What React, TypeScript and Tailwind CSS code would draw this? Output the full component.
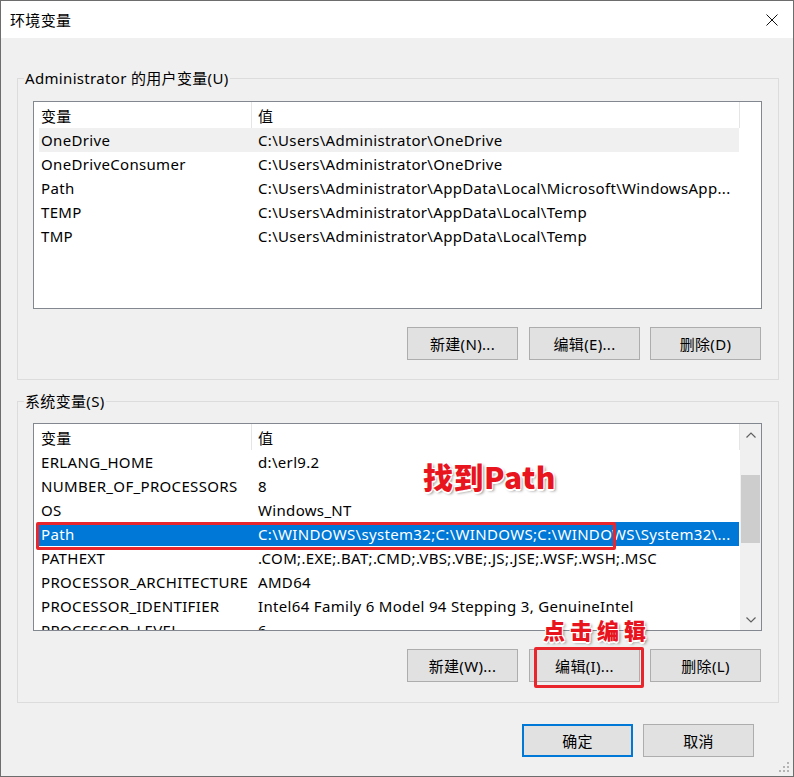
import React from "react";

type Row = [string, string];

const userVars: Row[] = [
  ["OneDrive", "C:\\Users\\Administrator\\OneDrive"],
  ["OneDriveConsumer", "C:\\Users\\Administrator\\OneDrive"],
  ["Path", "C:\\Users\\Administrator\\AppData\\Local\\Microsoft\\WindowsApp..."],
  ["TEMP", "C:\\Users\\Administrator\\AppData\\Local\\Temp"],
  ["TMP", "C:\\Users\\Administrator\\AppData\\Local\\Temp"],
];

const sysVars: Row[] = [
  ["ERLANG_HOME", "d:\\erl9.2"],
  ["NUMBER_OF_PROCESSORS", "8"],
  ["OS", "Windows_NT"],
  ["Path", "C:\\WINDOWS\\system32;C:\\WINDOWS;C:\\WINDOWS\\System32\\..."],
  ["PATHEXT", ".COM;.EXE;.BAT;.CMD;.VBS;.VBE;.JS;.JSE;.WSF;.WSH;.MSC"],
  ["PROCESSOR_ARCHITECTURE", "AMD64"],
  ["PROCESSOR_IDENTIFIER", "Intel64 Family 6 Model 94 Stepping 3, GenuineIntel"],
  ["PROCESSOR_LEVEL", "6"],
];

function Chevron({ down }: { down?: boolean }) {
  return (
    <svg width="10" height="6" viewBox="0 0 10 6" className={down ? "rotate-180" : ""}>
      <polyline points="0.5,5.5 5,1 9.5,5.5" fill="none" stroke="#606060" strokeWidth="1.2" />
    </svg>
  );
}

function ScrollBar() {
  return (
    <div className="flex w-[21px] shrink-0 flex-col bg-[#f0f0f0]">
      <div className="flex h-[21px] items-center justify-center">
        <Chevron />
      </div>
      <div className="flex-1">
        <div className="mx-[1px] mt-[30px] h-[68px] bg-[#cdcdcd]" />
      </div>
      <div className="flex h-[21px] items-center justify-center">
        <Chevron down />
      </div>
    </div>
  );
}

function ListView({
  rows,
  hover,
  selected,
  scroll,
}: {
  rows: Row[];
  hover?: number;
  selected?: number;
  scroll?: boolean;
}) {
  return (
    <div className="flex h-[208px] border border-[#828790] bg-white">
      <div className="flex w-[706px] flex-col overflow-hidden">
        <div className="flex h-[26px] shrink-0">
          <div className="flex w-[218px] items-center border-r border-[#e5e5e5] pt-[2px] pl-[7px]">变量</div>
          <div className="flex flex-1 items-center border-r border-[#e5e5e5] pt-[2px] pl-[6px]">值</div>
        </div>
        {rows.map(([name, value], i) => (
          <div
            key={name + i}
            className={
              "ml-[5px] flex h-[24px] w-[700px] shrink-0 items-center whitespace-nowrap " +
              (i === selected
                ? "bg-[#0078d7] text-white"
                : i === hover
                  ? "bg-[#f0f0f0]"
                  : "")
            }
          >
            <div className="w-[217px] shrink-0 overflow-hidden pl-[2px]">{name}</div>
            <div className="flex-1 overflow-hidden pl-[2px]">{value}</div>
          </div>
        ))}
      </div>
      {scroll ? <ScrollBar /> : <div className="w-[21px]" />}
    </div>
  );
}

function Btn({ children, primary, className = "" }: { children: React.ReactNode; primary?: boolean; className?: string }) {
  return (
    <div
      className={
        "flex h-[33px] w-[111px] items-center justify-center bg-[#e1e1e1] " +
        (primary ? "border-2 border-[#0078d7] " : "border border-[#adadad] ") +
        className
      }
    >
      {children}
    </div>
  );
}

const note =
  "font-['Noto_Sans_CJK_SC','Noto_Sans',sans-serif] font-black text-[#e8141e] whitespace-nowrap [text-shadow:-1px_-1px_0_#fff,1px_-1px_0_#fff,-1px_1px_0_#fff,1px_1px_0_#fff,0_2px_0_#fff,2px_2px_3px_rgba(0,0,0,0.45)]";

export default function App() {
  return (
    <div className="relative flex h-[777px] w-[794px] flex-col border border-[#6d6d6d] bg-[#f0f0f0] font-['Noto_Sans','Noto_Sans_CJK_SC',sans-serif] text-[15px] leading-[20px] tracking-[0.33px] text-black">
      {/* title bar */}
      <div className="flex h-[37px] shrink-0 items-center justify-between bg-white pr-[15px] pl-[9px]">
        <span>环境变量</span>
        <svg width="12" height="12" viewBox="0 0 12 12">
          <path d="M0.5 0.5 L11.5 11.5 M11.5 0.5 L0.5 11.5" stroke="#111" strokeWidth="1" />
        </svg>
      </div>

      <div className="flex flex-1 flex-col pt-[40px] pr-[14px] pl-[16px]">
        {/* user variables */}
        <div className="border border-[#dcdcdc] pr-[16px] pb-[19px] pl-[15px]">
          <div className="-mt-[11px] -ml-[9px] w-fit bg-[#f0f0f0] px-[1px]">Administrator 的用户变量(U)</div>
          <div className="mt-[13px]">
            <ListView rows={userVars} hover={0} />
          </div>
          <div className="mt-[18px] mr-[1px] flex justify-end">
            <Btn>新建(N)...</Btn>
            <Btn className="ml-[11px]">编辑(E)...</Btn>
            <Btn className="ml-[10px]">删除(D)</Btn>
          </div>
        </div>

        {/* system variables */}
        <div className="relative mt-[21px] border border-[#dcdcdc] pr-[16px] pb-[20px] pl-[15px]">
          <div className="-mt-[11px] -ml-[9px] w-fit bg-[#f0f0f0] px-[1px]">系统变量(S)</div>
          <div className="mt-[12px]">
            <ListView rows={sysVars} selected={3} scroll />
          </div>
          <div className="mt-[18px] mr-[1px] flex justify-end">
            <Btn>新建(W)...</Btn>
            <Btn className="ml-[11px]">编辑(I)...</Btn>
            <Btn className="ml-[10px]">删除(L)</Btn>
          </div>

          {/* annotations */}
          <div className="absolute top-[120px] left-[18px] h-[28px] w-[580px] rounded-[2px] border-[3px] border-[#e8262b]" />
          <div className={"absolute top-[57px] left-[405px] text-[30px] leading-[34px] tracking-[0.5px] " + note}>找到Path</div>
          <div className={"absolute top-[213px] left-[525px] text-[22px] leading-[28px] tracking-[5px] " + note}>点击编辑</div>
          <div className="absolute top-[245px] left-[516px] h-[41px] w-[110px] rounded-[2px] border-[3px] border-[#e8262b]" />
        </div>

        {/* dialog buttons */}
        <div className="mt-[21px] mr-[25px] flex justify-end gap-[10px]">
          <Btn primary>确定</Btn>
          <Btn>取消</Btn>
        </div>
      </div>

      {/* resize grip */}
      <svg className="absolute right-[3px] bottom-[3px]" width="12" height="12" viewBox="0 0 12 12">
        {[
          [9, 1],
          [9, 5],
          [5, 5],
          [9, 9],
          [5, 9],
          [1, 9],
        ].map(([x, y]) => (
          <rect key={x + "-" + y} x={x} y={y} width="2" height="2" fill="#b4b4b4" />
        ))}
      </svg>
    </div>
  );
}
